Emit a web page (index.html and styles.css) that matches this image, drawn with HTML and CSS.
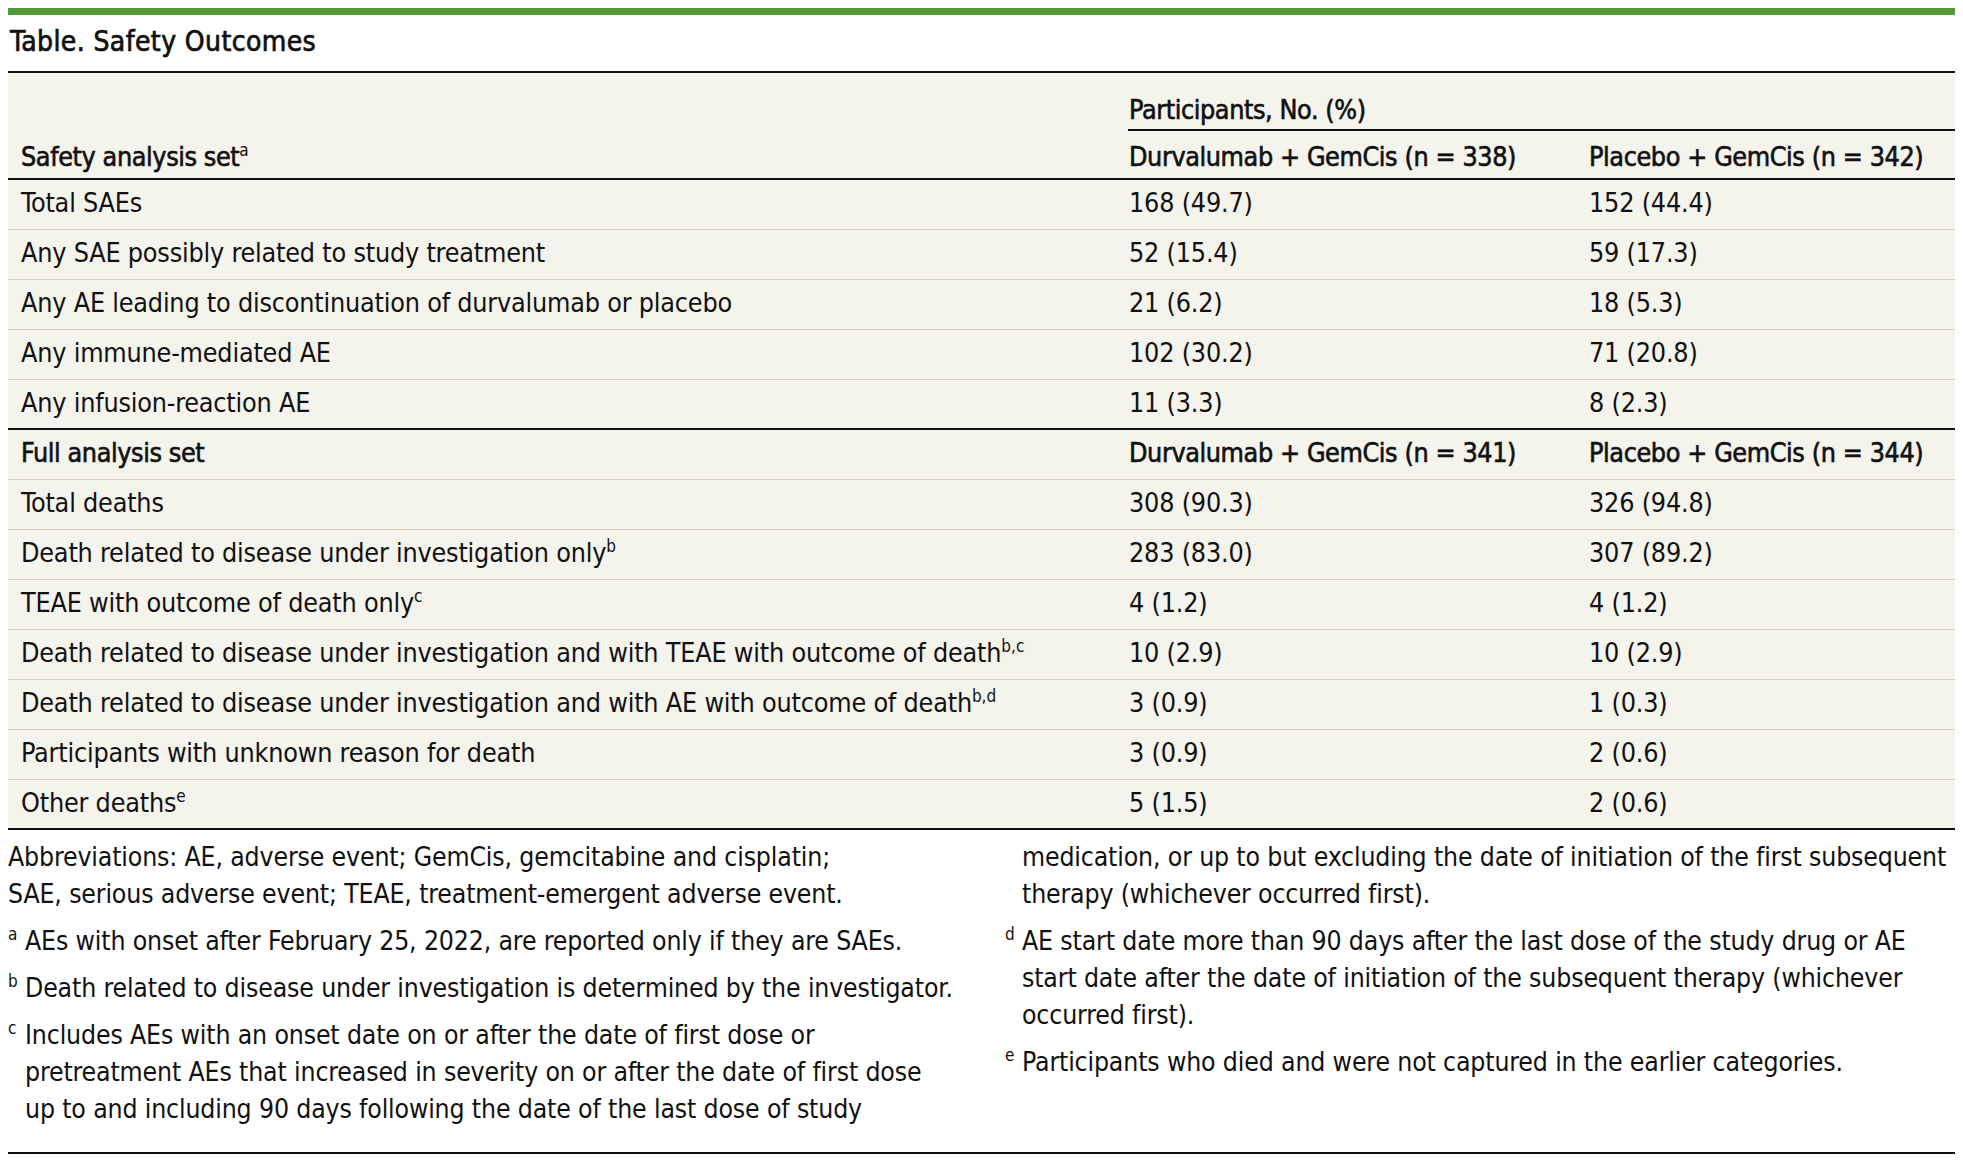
FILE: index.html
```html
<!DOCTYPE html>
<html lang="en">
<head>
<meta charset="utf-8">
<title>Table. Safety Outcomes</title>
<link rel="stylesheet" href="styles.css">
</head>
<body>
<div class="figure">
  <div class="topbar"></div>
  <h1 class="title">Table. Safety Outcomes</h1>
  <table class="outcomes">
    <colgroup>
      <col class="col-label">
      <col class="col-durva">
      <col class="col-placebo">
    </colgroup>
    <thead>
      <tr class="head-top">
        <th class="lead" rowspan="2">Safety analysis set<sup>a</sup></th>
        <th class="group" colspan="2">Participants, No. (%)</th>
      </tr>
      <tr class="head-sub">
        <th>Durvalumab + GemCis (n = 338)</th>
        <th>Placebo + GemCis (n = 342)</th>
      </tr>
    </thead>
    <tbody>
      <tr><td class="label">Total SAEs</td><td>168 (49.7)</td><td>152 (44.4)</td></tr>
      <tr><td class="label">Any SAE possibly related to study treatment</td><td>52 (15.4)</td><td>59 (17.3)</td></tr>
      <tr><td class="label">Any AE leading to discontinuation of durvalumab or placebo</td><td>21 (6.2)</td><td>18 (5.3)</td></tr>
      <tr><td class="label">Any immune-mediated AE</td><td>102 (30.2)</td><td>71 (20.8)</td></tr>
      <tr class="section-end"><td class="label">Any infusion-reaction AE</td><td>11 (3.3)</td><td>8 (2.3)</td></tr>
      <tr class="section"><th class="label">Full analysis set</th><th>Durvalumab + GemCis (n = 341)</th><th>Placebo + GemCis (n = 344)</th></tr>
      <tr><td class="label">Total deaths</td><td>308 (90.3)</td><td>326 (94.8)</td></tr>
      <tr><td class="label">Death related to disease under investigation only<sup>b</sup></td><td>283 (83.0)</td><td>307 (89.2)</td></tr>
      <tr><td class="label">TEAE with outcome of death only<sup>c</sup></td><td>4 (1.2)</td><td>4 (1.2)</td></tr>
      <tr><td class="label">Death related to disease under investigation and with TEAE with outcome of death<sup>b,c</sup></td><td>10 (2.9)</td><td>10 (2.9)</td></tr>
      <tr><td class="label">Death related to disease under investigation and with AE with outcome of death<sup>b,d</sup></td><td>3 (0.9)</td><td>1 (0.3)</td></tr>
      <tr><td class="label">Participants with unknown reason for death</td><td>3 (0.9)</td><td>2 (0.6)</td></tr>
      <tr class="last"><td class="label">Other deaths<sup>e</sup></td><td>5 (1.5)</td><td>2 (0.6)</td></tr>
    </tbody>
  </table>
  <div class="notes">
    <div class="notes-cols">
      <p class="abbr">Abbreviations: AE, adverse event; GemCis, gemcitabine and cisplatin;<br>SAE, serious adverse event; TEAE, treatment-emergent adverse event.</p>
      <p class="fn"><sup class="mk">a</sup>AEs with onset after February 25, 2022, are reported only if they are SAEs.</p>
      <p class="fn"><sup class="mk">b</sup>Death related to disease under investigation is determined by the investigator.</p>
      <p class="fn"><sup class="mk">c</sup>Includes AEs with an onset date on or after the date of first dose or<br>pretreatment AEs that increased in severity on or after the date of first dose<br>up to and including 90 days following the date of the last dose of study<br>medication, or up to but excluding the date of initiation of the first subsequent<br>therapy (whichever occurred first).</p>
      <p class="fn"><sup class="mk">d</sup>AE start date more than 90 days after the last dose of the study drug or AE<br>start date after the date of initiation of the subsequent therapy (whichever<br>occurred first).</p>
      <p class="fn"><sup class="mk">e</sup>Participants who died and were not captured in the earlier categories.</p>
    </div>
  </div>
</div>
</body>
</html>
```
FILE: styles.css
```css
html, body {
  background: #ffffff;
}

body {
  margin: 8px;
  font-family: "DejaVu Sans Condensed", "Liberation Sans", Arial, sans-serif;
  color: #111111;
}

.figure {
  width: 1947px;
}

.topbar {
  height: 7px;
  background: #549a3a;
}

.title {
  margin: 0;
  padding: 12px 0 14px 2px;
  font-size: 28px;
  line-height: 30px;
  font-weight: normal;
  letter-spacing: 0.4px;
  -webkit-text-stroke: 0.7px #111111;
}

.outcomes {
  width: 100%;
  table-layout: fixed;
  border-collapse: separate;
  border-spacing: 0;
  border-top: 2px solid #111111;
  background: #f4f3ec;
  font-size: 26.7px;
  line-height: 30px;
  letter-spacing: -0.2px;
}

.col-label { width: 1120px; }
.col-durva { width: 460px; }

.outcomes th,
.outcomes td {
  padding: 8px 0 11px 1px;
  text-align: left;
  vertical-align: top;
  font-weight: normal;
  white-space: nowrap;
  border-bottom: 1px solid #d6d3c6;
}

.outcomes .label,
.outcomes .lead {
  padding-left: 13px;
}

.outcomes thead th,
.outcomes .section th {
  font-weight: normal;
  letter-spacing: -0.4px;
  -webkit-text-stroke: 0.6px #111111;
}

.head-top .group {
  padding: 22px 0 4px 1px;
  vertical-align: bottom;
  border-bottom: 2px solid #111111;
}

.head-top .lead {
  padding-top: 0;
  padding-bottom: 6px;
  vertical-align: bottom;
  border-bottom: 2px solid #111111;
}

.head-sub th {
  padding: 11px 0 6px 1px;
  border-bottom: 2px solid #111111;
}

.section-end td,
.last td {
  padding-bottom: 10px;
  border-bottom: 2px solid #111111;
}

.outcomes sup {
  font-size: 17px;
  line-height: 0;
  vertical-align: 10px;
  font-weight: normal;
  letter-spacing: 0;
  -webkit-text-stroke: 0;
}

.notes {
  padding: 8px 0 24px;
  border-bottom: 2px solid #111111;
  font-size: 26.4px;
  line-height: 37px;
  letter-spacing: -0.15px;
}

.notes-cols {
  height: 290px;
  column-count: 2;
  column-gap: 47px;
  column-fill: auto;
  orphans: 1;
  widows: 1;
}

.notes p {
  margin: 0 0 10px;
  white-space: nowrap;
}

.notes .fn {
  padding-left: 17px;
  text-indent: -17px;
}

.notes .mk {
  display: inline-block;
  width: 17px;
  text-indent: 0;
  font-size: 17px;
  line-height: 0;
  vertical-align: 10px;
  letter-spacing: 0;
}
```
